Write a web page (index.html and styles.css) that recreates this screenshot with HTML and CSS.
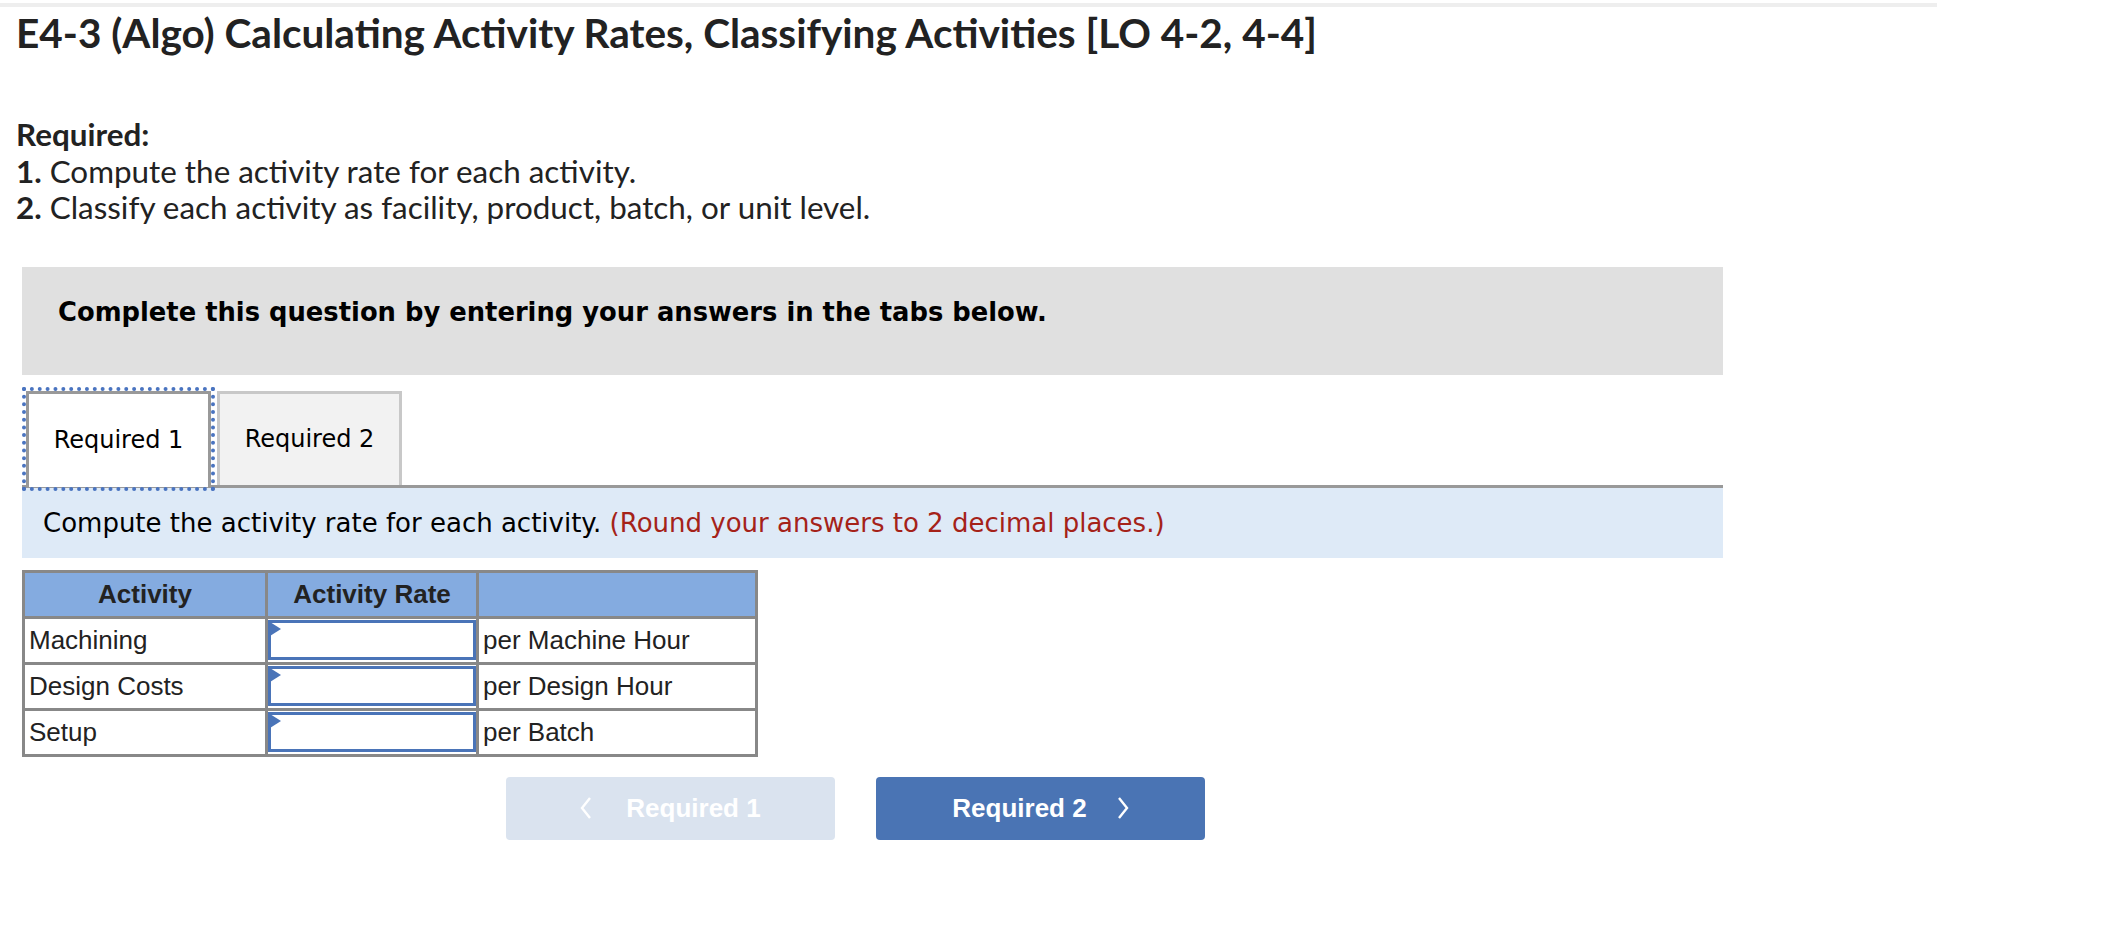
FILE: index.html
```html
<!DOCTYPE html>
<html lang="en">
<head>
<meta charset="utf-8">
<title>E4-3 (Algo) Calculating Activity Rates</title>
<link rel="stylesheet" href="styles.css">
</head>
<body>
<div class="topline"></div>
<div class="page">
  <h1 class="title">E4-3 (Algo) Calculating Activity Rates, Classifying Activities [LO 4-2, 4-4]</h1>
  <div class="required">
    <p class="req-head">Required:</p>
    <p><b>1.</b> Compute the activity rate for each activity.</p>
    <p><b>2.</b> Classify each activity as facility, product, batch, or unit level.</p>
  </div>
  <div class="panel">
    <div class="notice">Complete this question by entering your answers in the tabs below.</div>
    <div class="tabs">
      <div class="tab active">Required 1</div>
      <div class="tab">Required 2</div>
    </div>
    <div class="instr">Compute the activity rate for each activity. <span class="red">(Round your answers to 2 decimal places.)</span></div>
    <table class="grid">
      <thead>
        <tr><th class="c1">Activity</th><th class="c2">Activity Rate</th><th class="c3"></th></tr>
      </thead>
      <tbody>
        <tr><td>Machining</td><td class="inp"><div class="box"><span class="flag"></span></div></td><td>per Machine Hour</td></tr>
        <tr><td>Design Costs</td><td class="inp"><div class="box"><span class="flag"></span></div></td><td>per Design Hour</td></tr>
        <tr><td>Setup</td><td class="inp"><div class="box"><span class="flag"></span></div></td><td>per Batch</td></tr>
      </tbody>
    </table>
    <div class="nav">
      <div class="btn prev">
        <svg class="chev" width="12" height="22" viewBox="0 0 12 22"><polyline points="10,1 2,11 10,21" fill="none" stroke="#fff" stroke-width="2.4"/></svg>
        <span>Required 1</span>
      </div>
      <div class="btn next">
        <span>Required 2</span>
        <svg class="chev" width="12" height="22" viewBox="0 0 12 22"><polyline points="2,1 10,11 2,21" fill="none" stroke="#fff" stroke-width="2.4"/></svg>
      </div>
    </div>
  </div>
</div>
</body>
</html>
```

FILE: styles.css
```css
html, body {
  margin: 0;
  padding: 0;
  background: #fff;
}

.topline {
  width: 1937px;
  height: 4px;
  margin-top: 3px;
  background: #eeeeee;
}

.page {
  padding: 0 0 0 16px;
}

.title {
  margin: 4px 0 0 0;
  font-family: Lato, "Open Sans", sans-serif;
  font-weight: 700;
  font-size: 40.5px;
  line-height: 44px;
  color: #222;
}

.required {
  margin-top: 61px;
  font-family: Lato, "Open Sans", sans-serif;
  font-size: 31.4px;
  color: #222;
}

.required p {
  margin: 0;
  line-height: 36.5px;
}

.required .req-head {
  font-weight: 700;
}

.panel {
  margin-top: 41px;
  margin-left: 6px;
  width: 1701px;
}

.notice {
  background: #e0e0e0;
  height: 108px;
  box-sizing: border-box;
  padding: 29px 0 0 36px;
  font-family: "DejaVu Sans", Verdana, sans-serif;
  font-weight: 700;
  font-size: 25.8px;
  line-height: 32px;
  color: #000;
}

.tabs {
  display: flex;
  margin-top: 16px;
  padding-left: 4px;
  border-bottom: 3px solid #999;
  height: 94px;
}

.tab {
  box-sizing: border-box;
  width: 185px;
  height: 94px;
  display: flex;
  align-items: center;
  justify-content: center;
  font-family: "DejaVu Sans", Verdana, sans-serif;
  font-size: 24px;
  color: #000;
  background: #f2f2f2;
  border: 3px solid #c8c8c8;
  border-bottom: none;
  margin-left: 6px;
}

.tab.active {
  margin-left: 0;
  height: 96px;
  background: #fff;
  border-color: #999;
  outline: 4px dotted #4a74c0;
  outline-offset: 0;
  position: relative;
  z-index: 1;
}

.instr {
  background: #deeaf7;
  height: 70px;
  box-sizing: border-box;
  padding: 19px 0 0 21px;
  font-family: "DejaVu Sans", Verdana, sans-serif;
  font-size: 26px;
  line-height: 32px;
  color: #000;
}

.instr .red {
  color: #a52219;
}

.grid {
  margin-top: 12px;
  border-collapse: collapse;
  font-family: "Liberation Sans", Arial, sans-serif;
  font-size: 26px;
  color: #222;
}

.grid th, .grid td {
  border: 3px solid #888;
  padding: 0 4px;
  box-sizing: border-box;
}

.grid th {
  background: #84abe0;
  font-weight: 700;
  text-align: center;
  height: 46px;
}

.grid td {
  height: 46px;
  text-align: left;
}

.c1 { width: 243px; }
.c2 { width: 211px; }
.c3 { width: 279px; }

.grid td.inp {
  padding: 0;
}

.box {
  position: relative;
  height: 40px;
  border: 3px solid #4a74b8;
  box-sizing: border-box;
  background: #fff;
}

.flag {
  position: absolute;
  left: -1px;
  top: -1px;
  width: 0;
  height: 0;
  border-top: 7px solid transparent;
  border-bottom: 7px solid transparent;
  border-left: 11px solid #4a74b8;
}

.nav {
  display: flex;
  gap: 41px;
  margin-top: 20px;
  margin-left: 484px;
}

.btn {
  width: 329px;
  height: 63px;
  border-radius: 4px;
  display: flex;
  align-items: center;
  justify-content: center;
  gap: 34px;
  font-family: "Liberation Sans", Arial, sans-serif;
  font-weight: 700;
  font-size: 26px;
  color: #fff;
}

.btn.prev {
  background: #dae3ef;
}

.btn.next {
  background: #4a74b4;
  gap: 30px;
}

.chev {
  display: block;
}
```
